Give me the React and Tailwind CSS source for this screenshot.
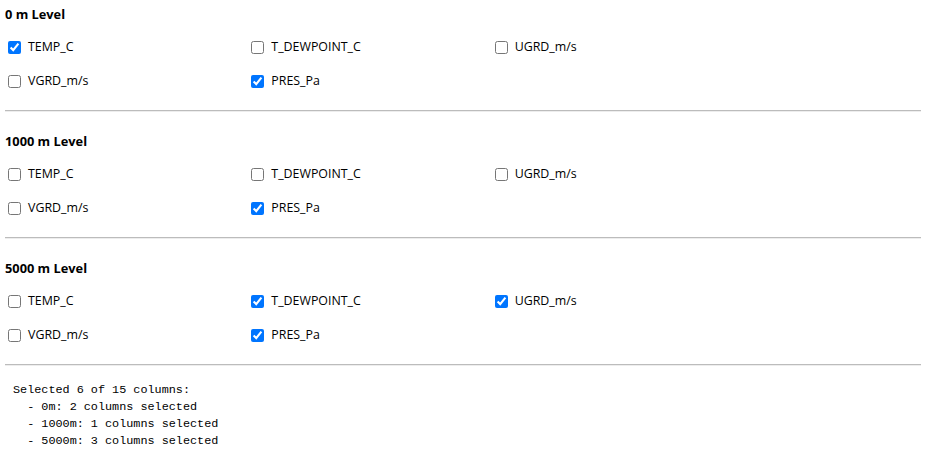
import React, { useState } from 'react';

const FIELDS = ['TEMP_C', 'T_DEWPOINT_C', 'UGRD_m/s', 'VGRD_m/s', 'PRES_Pa'];

const INITIAL = {
  '0': ['TEMP_C', 'PRES_Pa'],
  '1000': ['PRES_Pa'],
  '5000': ['T_DEWPOINT_C', 'UGRD_m/s', 'PRES_Pa'],
};

export default function App() {
  const [selected, setSelected] = useState(INITIAL);

  const toggle = (level, field) => {
    setSelected((prev) => {
      const list = prev[level];
      const next = list.includes(field) ? list.filter((f) => f !== field) : [...list, field];
      return { ...prev, [level]: next };
    });
  };

  const levels = Object.keys(selected);
  const total = levels.reduce((n, l) => n + selected[l].length, 0);

  const summary = [
    `Selected ${total} of ${levels.length * FIELDS.length} columns:`,
    ...levels.map((l) => `  - ${l}m: ${selected[l].length} columns selected`),
  ].join('\n');

  return (
    <div className="min-h-screen bg-white px-[5px] pt-[6px] text-black font-['Open_Sans','Noto_Sans',sans-serif]">
      {levels.map((level, i) => (
        <section key={level} className={i > 0 ? 'mt-[21px]' : ''}>
          <h3 className="h-[16px] text-[12.8px] leading-[16px] font-bold">{level} m Level</h3>
          <div className="mt-[8px] grid w-[730px] grid-cols-3">
            {FIELDS.map((field) => (
              <label key={field} className="flex h-[34px] items-center text-[12.4px]">
                <input
                  type="checkbox"
                  className="ml-[3px] mr-[7px] h-[13px] w-[13px] accent-[#0075ff]"
                  checked={selected[level].includes(field)}
                  onChange={() => toggle(level, field)}
                />
                {field}
              </label>
            ))}
          </div>
          <div className="mt-[12px] border-t border-b border-t-[#bcbcbc] border-b-[#ededed]" />
        </section>
      ))}
      <pre className="mt-[16px] ml-[8px] text-[11.8px] leading-[17px] text-black font-['Liberation_Mono',monospace]">
        {summary}
      </pre>
    </div>
  );
}
